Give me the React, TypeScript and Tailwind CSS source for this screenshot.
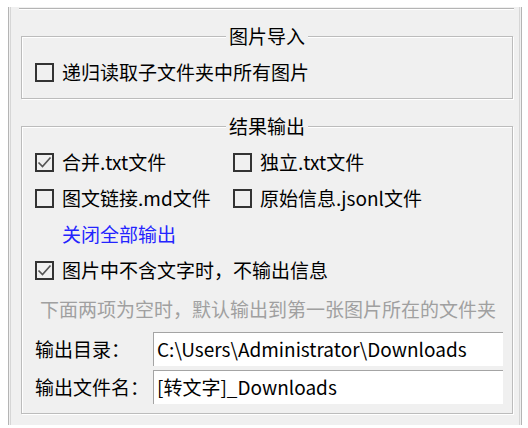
import React from "react";

const FONT = { fontFamily: '"Noto Sans CJK SC", "Noto Sans", sans-serif' } as React.CSSProperties;

function Box({ checked }: { checked?: boolean }) {
  return (
    <span className="relative flex h-[19px] w-[19px] shrink-0 items-center justify-center border-2 border-[#333333] bg-[#f0f0f0]">
      {checked && (
        <svg width="15" height="15" viewBox="0 0 15 15" className="block">
          <path d="M1.5 7.5 L5.5 11.5 L13.5 2.5" fill="none" stroke="#555555" strokeWidth="1.7" />
        </svg>
      )}
    </span>
  );
}

function Check({ label, checked }: { label: string; checked?: boolean }) {
  return (
    <div className="flex items-center gap-[8px]">
      <Box checked={checked} />
      <span className="whitespace-nowrap leading-[24px]">{label}</span>
    </div>
  );
}

function Group({ title, className, children }: { title: string; className: string; children: React.ReactNode }) {
  return (
    <div className={"relative ml-[10px] w-[492px] border border-[#bcbcbc] shadow-[1px_1px_0_#ffffff,inset_1px_1px_0_#ffffff] " + className}>
      <span className="absolute left-[204px] top-[-13px] bg-[#f0f0f0] px-[3px] leading-[24px] whitespace-nowrap">{title}</span>
      {children}
    </div>
  );
}

export default function App() {
  return (
    <div className="h-[428px] w-[528px] overflow-hidden bg-white text-[19px] text-black" style={FONT}>
      <div className="ml-[8px] mt-[7px] h-[418px] w-[514px] border-x border-[#b4b4b4] bg-[#f0f0f0]">
        <div className="mx-[1px] h-full border-x border-[#d6d6d6]">
          <div className="h-[1px]" />
          <div className="ml-[8px] h-[1px] w-[495px] bg-[#b4b4b4]" />
          <div className="ml-[8px] h-[1px] w-[495px] bg-white" />
          <div className="h-[26px]" />
          <Group title="图片导入" className="h-[63px] pl-[13px] pt-[23px]">
            <Check label="递归读取子文件夹中所有图片" />
          </Group>
          <div className="h-[27px]" />
          <Group title="结果输出" className="h-[288px] pl-[13px] pr-[8px] pt-[17px]">
            <div className="flex h-[36px] items-center">
              <div className="w-[198px]">
                <Check label="合并.txt文件" checked />
              </div>
              <Check label="独立.txt文件" />
            </div>
            <div className="flex h-[36px] items-center">
              <div className="w-[198px]">
                <Check label="图文链接.md文件" />
              </div>
              <Check label="原始信息.jsonl文件" />
            </div>
            <div className="flex h-[36px] items-center pl-[27px]">
              <span className="leading-[24px] text-[#2424ff]">关闭全部输出</span>
            </div>
            <div className="flex h-[36px] items-center">
              <Check label="图片中不含文字时，不输出信息" checked />
            </div>
            <div className="flex h-[42px] items-center pl-[5px]">
              <span className="whitespace-nowrap leading-[24px] text-[#a0a0a0]">下面两项为空时，默认输出到第一张图片所在的文件夹</span>
            </div>
            <div className="mt-[2px] flex h-[34px] items-center">
              <span className="w-[118px] shrink-0 whitespace-nowrap">输出目录：</span>
              <div className="flex h-full w-[350px] items-center border-l border-t border-[#a4a4a4] bg-white pl-[3px] whitespace-nowrap">
                C:\Users\Administrator\Downloads
              </div>
            </div>
            <div className="mt-[4px] flex h-[34px] items-center">
              <span className="w-[118px] shrink-0 whitespace-nowrap">输出文件名：</span>
              <div className="flex h-full w-[350px] items-center border-l border-t border-[#a4a4a4] bg-white pl-[3px] whitespace-nowrap">
                [转文字]_Downloads
              </div>
            </div>
          </Group>
        </div>
      </div>
    </div>
  );
}
